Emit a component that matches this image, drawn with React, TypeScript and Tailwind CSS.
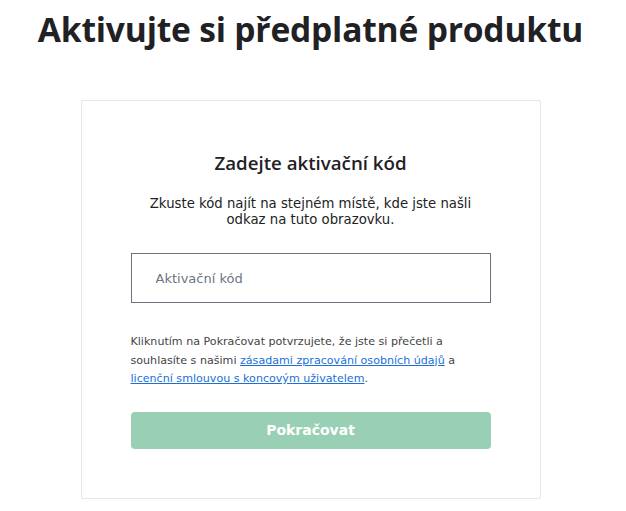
export default function App() {
  return (
    <div className="min-h-screen bg-white flex flex-col items-center pr-[5px] font-['DejaVu_Sans',sans-serif]">
      {/* Page title */}
      <h1 className="mt-[7px] text-[33.6px] leading-[44px] font-bold text-[#1f2125] font-['Open_Sans',sans-serif] tracking-[-0.2px]">
        Aktivujte si předplatné produktu
      </h1>

      {/* Card */}
      <div className="mt-[49px] w-[460px] h-[399px] border border-[#e6e6e6] rounded-[2px] px-[49px] pt-[50px] flex flex-col">
        <h2 className="text-center text-[18.7px] leading-[24px] font-semibold text-[#1f2125] font-['Open_Sans',sans-serif]">
          Zadejte aktivační kód
        </h2>

        <p className="mt-[21px] text-center text-[13.25px] leading-[16px] text-[#222]">
          Zkuste kód najít na stejném místě, kde jste našli
          <br />
          odkaz na tuto obrazovku.
        </p>

        <input
          type="text"
          placeholder="Aktivační kód"
          className="mt-[25px] h-[50px] w-full border border-[#6b7280] px-[24px] text-[13px] text-[#222] placeholder:text-[#6b7480] outline-none"
        />

        <p className="mt-[30px] text-[11.1px] leading-[18.5px] text-[#444]">
          Kliknutím na Pokračovat potvrzujete, že jste si přečetli a
          <br />
          souhlasíte s našimi{' '}
          <a href="#" className="text-[#1a6fd8] underline">
            zásadami zpracování osobních údajů
          </a>{' '}
          a
          <br />
          <a href="#" className="text-[#1a6fd8] underline">
            licenční smlouvou s koncovým uživatelem
          </a>
          .
        </p>

        <button className="mt-[23px] h-[37px] w-full rounded-[4px] bg-[#99cfb4] text-white text-[14px] font-bold">
          Pokračovat
        </button>
      </div>
    </div>
  );
}
